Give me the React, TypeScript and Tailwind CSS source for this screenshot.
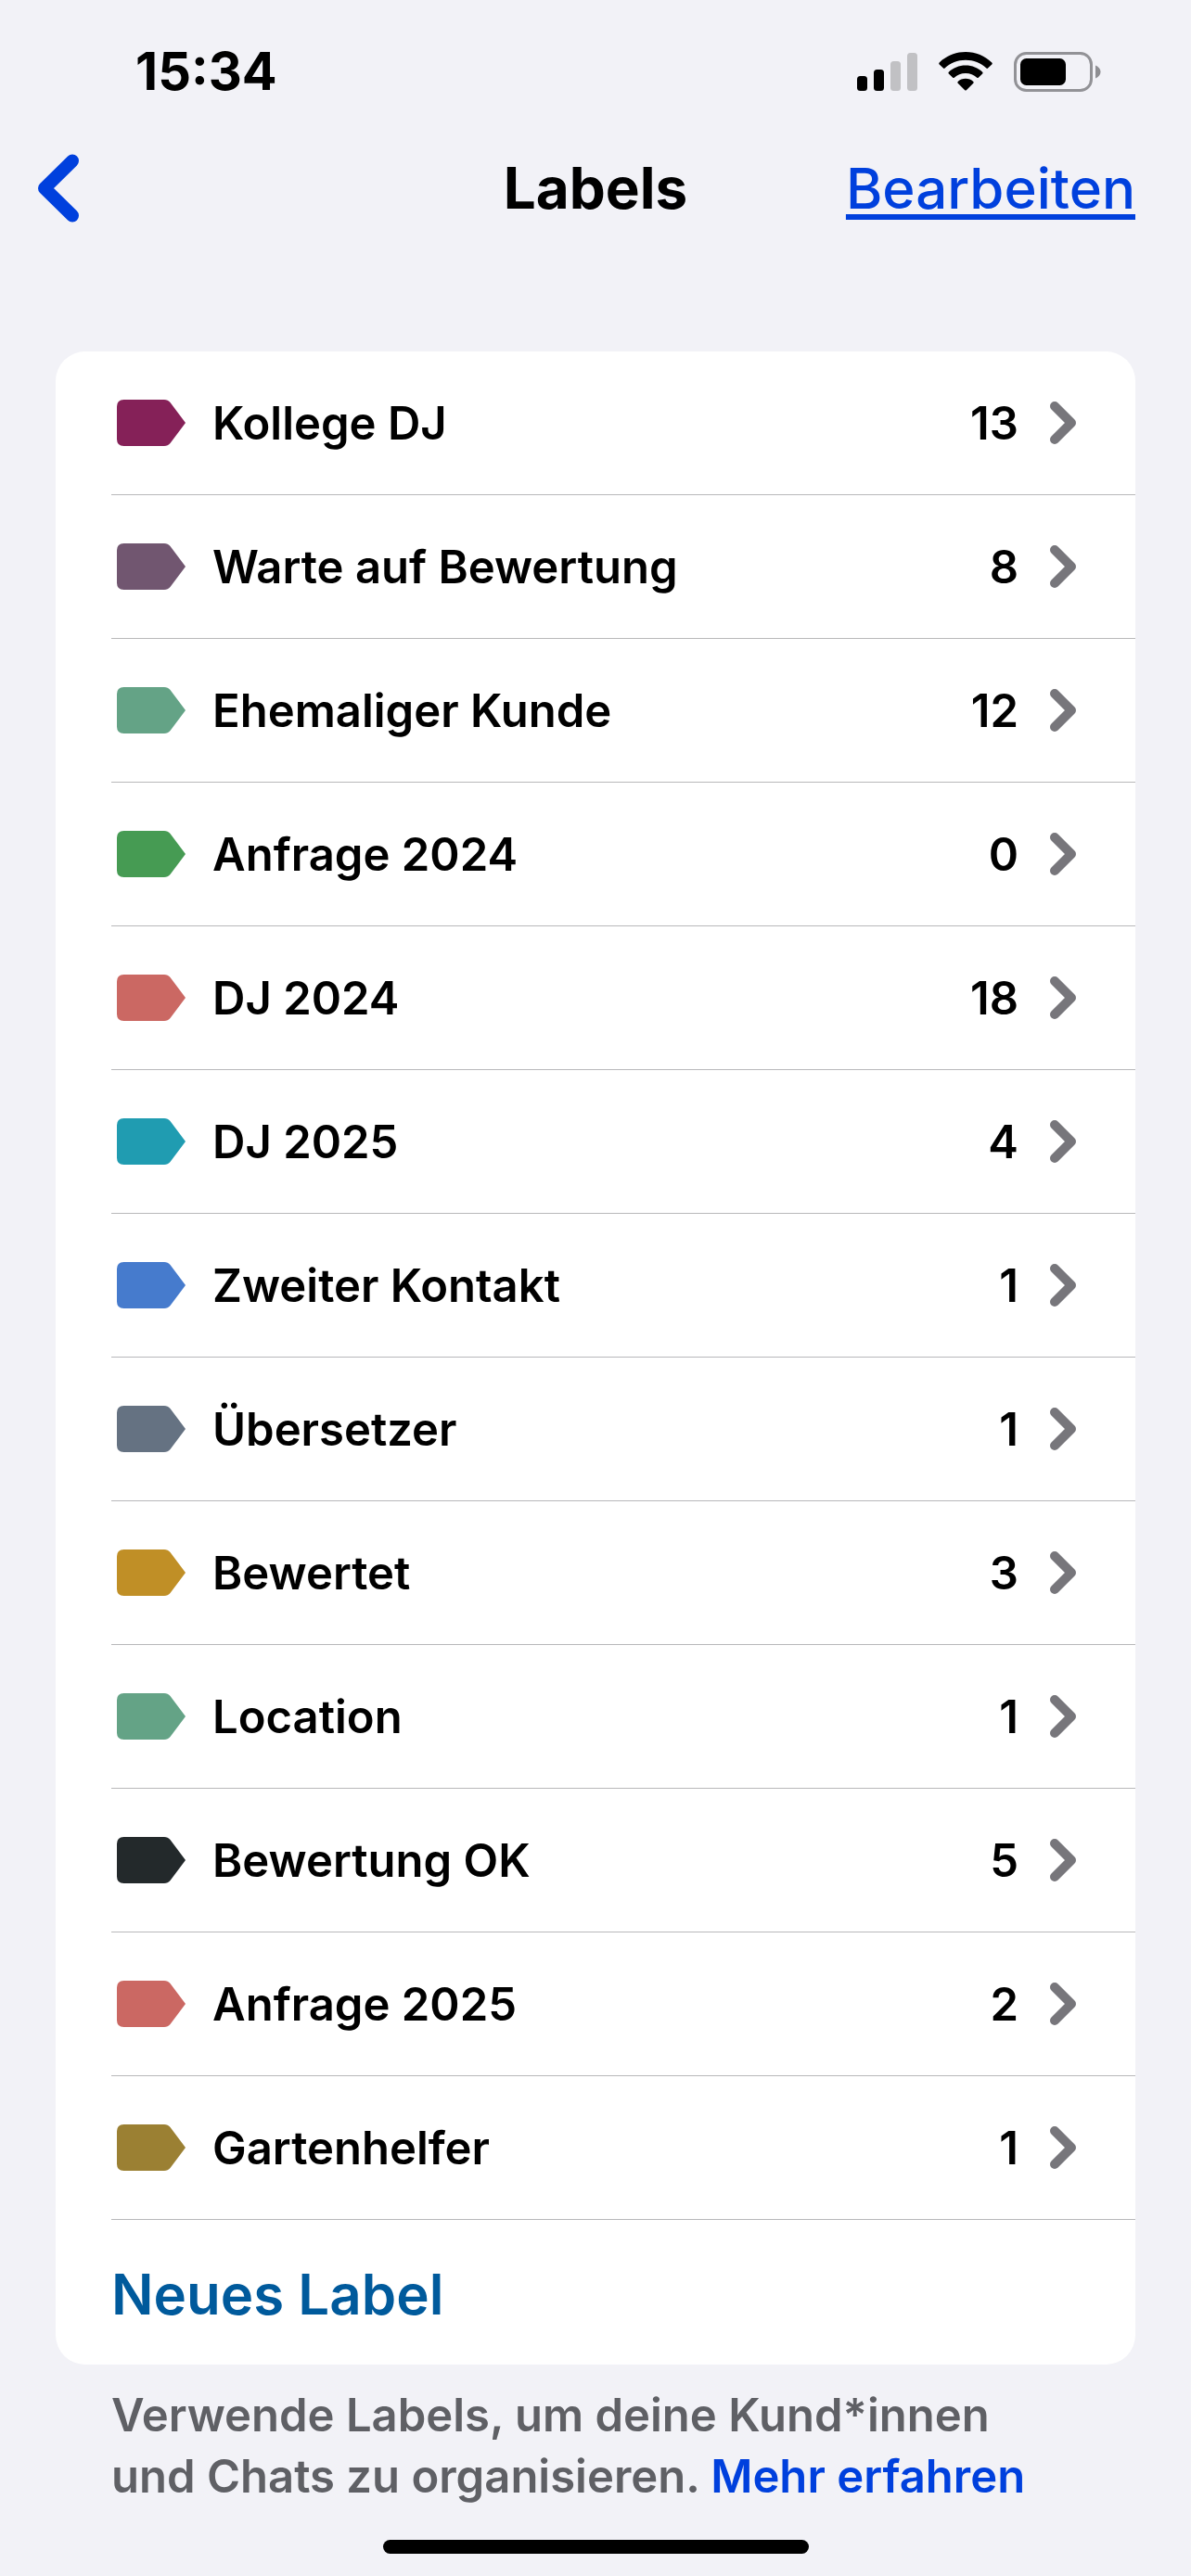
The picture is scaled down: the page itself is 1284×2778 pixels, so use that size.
import React from "react";

type Label = { name: string; count: number; tag: string };

const labels: Label[] = [
  { name: "Kollege DJ", count: 13, tag: "text-[#852158]" },
  { name: "Warte auf Bewertung", count: 8, tag: "text-[#715670]" },
  { name: "Ehemaliger Kunde", count: 12, tag: "text-[#64a386]" },
  { name: "Anfrage 2024", count: 0, tag: "text-[#469b53]" },
  { name: "DJ 2024", count: 18, tag: "text-[#cb6863]" },
  { name: "DJ 2025", count: 4, tag: "text-[#209cb1]" },
  { name: "Zweiter Kontakt", count: 1, tag: "text-[#467bcd]" },
  { name: "Übersetzer", count: 1, tag: "text-[#657282]" },
  { name: "Bewertet", count: 3, tag: "text-[#c08f26]" },
  { name: "Location", count: 1, tag: "text-[#64a386]" },
  { name: "Bewertung OK", count: 5, tag: "text-[#23292b]" },
  { name: "Anfrage 2025", count: 2, tag: "text-[#cb6863]" },
  { name: "Gartenhelfer", count: 1, tag: "text-[#9b8033]" },
];

function SignalIcon() {
  return (
    <svg width="65" height="42" viewBox="0 0 65 42" aria-hidden="true">
      <rect x="0" y="26" width="11" height="16" rx="3.5" />
      <rect x="18" y="19" width="11" height="23" rx="3.5" />
      <rect x="36" y="10" width="11" height="32" rx="3.5" fill="#c1c1c4" />
      <rect x="54" y="1" width="11" height="41" rx="3.5" fill="#c1c1c4" />
    </svg>
  );
}

function WifiIcon() {
  return (
    <svg width="58" height="42" viewBox="0 0 58 42" aria-hidden="true">
      <path d="M29 0C40 0 50 4.300 57.300 11.500Q58.200 12.500 57.300 13.500L53 17.600Q52.200 18.300 51.400 17.600C45.500 12 37.500 8.800 29 8.800S12.500 12 6.600 17.600Q5.800 18.300 5 17.600L.7 13.500Q-.2 12.500.7 11.500C8 4.300 18 0 29 0Z" />
      <path d="M29 14.500C36 14.500 42.500 17.200 47.200 21.700Q48.100 22.600 47.200 23.500L42.800 27.700Q42 28.400 41.200 27.700C38 24.800 33.700 23.100 29 23.100S20 24.800 16.800 27.700Q16 28.400 15.200 27.700L10.800 23.500Q9.900 22.600 10.800 21.700C15.500 17.200 22 14.500 29 14.500Z" />
      <path d="M29 28.800C32.200 28.800 35.100 30 37.300 31.900Q38.200 32.800 37.300 33.700L29.800 41.200Q29 42 28.200 41.200L20.700 33.700Q19.800 32.800 20.700 31.900C22.900 30 25.800 28.800 29 28.800Z" />
    </svg>
  );
}

function BatteryIcon() {
  return (
    <svg width="94" height="43" viewBox="0 0 94 43" aria-hidden="true">
      <rect x="1.500" y="1.500" width="82" height="40" rx="12" fill="none" stroke="#929296" strokeWidth="3" />
      <rect x="7" y="7" width="49" height="29" rx="6.500" />
      <path d="M88 14.500C91.500 16 93.500 18.500 93.500 21.500S91.500 27 88 28.500Z" fill="#8e8e92" />
    </svg>
  );
}

function TagIcon({ className }: { className: string }) {
  return (
    <svg className={className} width="74" height="50" viewBox="0 0 74 50" fill="currentColor" aria-hidden="true">
      <path d="M7.500 0H51Q55 0 57.500 3L74 25L57.500 47Q55 50 51 50H7.500Q0 50 0 42.500V7.500Q0 0 7.500 0Z" />
    </svg>
  );
}

function ChevronIcon() {
  return (
    <svg width="28" height="46" viewBox="0 0 28 46" fill="none" aria-hidden="true">
      <path d="M5 5L23 23L5 41" stroke="#77767b" strokeWidth="10" strokeLinecap="round" strokeLinejoin="round" />
    </svg>
  );
}

export default function App() {
  return (
    <div className="flex min-h-screen flex-col bg-[#f2f2f7] font-['Inter',sans-serif] text-black">
      <div className="flex h-[150px] items-center justify-between pt-1 pr-[97px] pl-[146px]">
        <span className="text-[56px] leading-[60px] font-bold">15:34</span>
        <div className="flex items-center gap-[23px]">
          <SignalIcon />
          <WifiIcon />
          <BatteryIcon />
        </div>
      </div>

      <header className="grid h-[106px] grid-cols-[1fr_auto_1fr] items-center px-10">
        <button type="button" aria-label="Zurück" className="justify-self-start">
          <svg width="46" height="74" viewBox="0 0 46 74" fill="none" aria-hidden="true">
            <path d="M38 7.500L8 37L38 66.500" stroke="#0040dd" strokeWidth="14" strokeLinecap="round" strokeLinejoin="round" />
          </svg>
        </button>
        <h1 className="text-[62px] leading-[72px] font-bold">Labels</h1>
        <button
          type="button"
          className="mr-5 justify-self-end text-[60px] leading-[72px] font-medium text-[#0040dd] underline decoration-[6px] underline-offset-[6px]"
        >
          Bearbeiten
        </button>
      </header>

      <main className="mt-[123px] px-[60px]">
        <section className="overflow-hidden rounded-[32px] bg-white pl-[60px]">
          <ul>
            {labels.map((label) => (
              <li key={label.name} className="border-b border-[#b8b8ba]">
                <button type="button" className="flex h-[154px] w-full items-center pr-16 pl-[6px] text-left text-[49px] leading-[62px] font-semibold">
                  <TagIcon className={label.tag} />
                  <span className="ml-[29px] flex-1 pt-0.5">{label.name}</span>
                  <span className="mr-[34px] pt-0.5">{label.count}</span>
                  <ChevronIcon />
                </button>
              </li>
            ))}
          </ul>
          <button type="button" className="flex h-[156px] w-full items-center pt-1 text-left text-[60px] leading-[72px] font-semibold text-[#005a9c]">
            Neues Label
          </button>
        </section>
        <p className="pt-[22px] pr-[90px] pl-[60px] text-[49px] leading-[66px] font-semibold text-[#5f6065]">
          <span>Verwende Labels, um deine Kund*innen</span>{" "}
          <span>und Chats zu organisieren.</span>{" "}
          <a href="#mehr-erfahren" className="text-[#0040dd]">Mehr erfahren</a>
        </p>
      </main>

      <footer className="mt-auto flex justify-center pb-6">
        <div className="h-[15px] w-[459px] rounded-full bg-black" />
      </footer>
    </div>
  );
}
